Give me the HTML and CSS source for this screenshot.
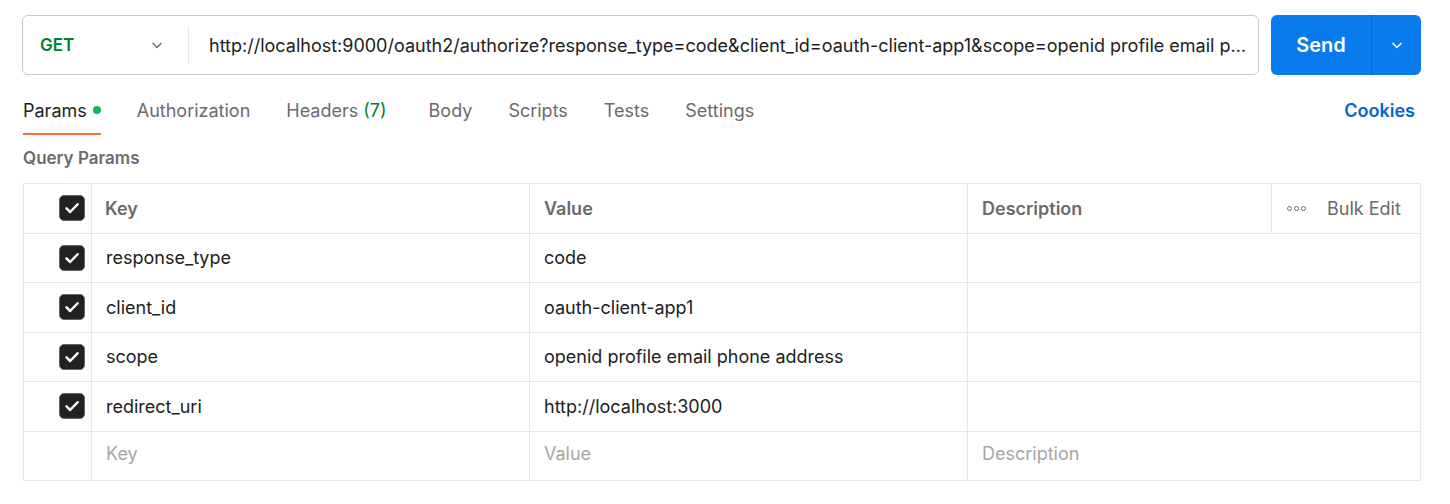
FILE: index.html
```html
<!DOCTYPE html>
<html>
<head>
<meta charset="utf-8">
<link rel="stylesheet" href="styles.css">
</head>
<body>
<div class="page">
  <div class="reqbar">
    <div class="urlbox">
      <div class="method">
        <span class="method-name">GET</span>
        <svg class="chev" width="16" height="16" viewBox="0 0 16 16"><path d="M3.5 6l4.5 4.5L12.5 6" fill="none" stroke="#6b6b6b" stroke-width="1.4"/></svg>
      </div>
      <div class="divider"></div>
      <div class="url">http://localhost:9000/oauth2/authorize?response_type=code&amp;client_id=oauth-client-app1&amp;scope=openid profile email phone address&amp;redirect_uri=http://localhost:3000</div>
    </div>
    <div class="send">
      <span class="send-label">Send</span>
      <span class="send-drop"><svg width="16" height="16" viewBox="0 0 16 16"><path d="M3.5 6l4.5 4.5L12.5 6" fill="none" stroke="#fff" stroke-width="1.4"/></svg></span>
    </div>
  </div>

  <div class="tabs">
    <div class="tab active">Params<span class="dot"></span></div>
    <div class="tab">Authorization</div>
    <div class="tab tab-headers">Headers <span class="count">(7)</span></div>
    <div class="tab">Body</div>
    <div class="tab">Scripts</div>
    <div class="tab">Tests</div>
    <div class="tab">Settings</div>
    <div class="spacer"></div>
    <div class="cookies">Cookies</div>
  </div>

  <div class="section-title">Query Params</div>

  <div class="table">
    <div class="row head">
      <div class="cell chk"><span class="box"><svg width="20" height="20" viewBox="0 0 16 16"><path d="M3.6 8.3l2.9 2.9 6-6.2" fill="none" stroke="#fff" stroke-width="2" stroke-linecap="round" stroke-linejoin="round"/></svg></span></div>
      <div class="cell key">Key</div>
      <div class="cell val">Value</div>
      <div class="cell desc head-desc">
        <span class="desc-label">Description</span>
        <div class="bulk"><span class="dots"><i></i><i></i><i></i></span><span class="bulk-label">Bulk Edit</span></div>
      </div>
    </div>
    <div class="row">
      <div class="cell chk"><span class="box"><svg width="20" height="20" viewBox="0 0 16 16"><path d="M3.6 8.3l2.9 2.9 6-6.2" fill="none" stroke="#fff" stroke-width="2" stroke-linecap="round" stroke-linejoin="round"/></svg></span></div>
      <div class="cell key">response_type</div>
      <div class="cell val">code</div>
      <div class="cell desc"></div>
    </div>
    <div class="row">
      <div class="cell chk"><span class="box"><svg width="20" height="20" viewBox="0 0 16 16"><path d="M3.6 8.3l2.9 2.9 6-6.2" fill="none" stroke="#fff" stroke-width="2" stroke-linecap="round" stroke-linejoin="round"/></svg></span></div>
      <div class="cell key">client_id</div>
      <div class="cell val">oauth-client-app1</div>
      <div class="cell desc"></div>
    </div>
    <div class="row">
      <div class="cell chk"><span class="box"><svg width="20" height="20" viewBox="0 0 16 16"><path d="M3.6 8.3l2.9 2.9 6-6.2" fill="none" stroke="#fff" stroke-width="2" stroke-linecap="round" stroke-linejoin="round"/></svg></span></div>
      <div class="cell key">scope</div>
      <div class="cell val">openid profile email phone address</div>
      <div class="cell desc"></div>
    </div>
    <div class="row">
      <div class="cell chk"><span class="box"><svg width="20" height="20" viewBox="0 0 16 16"><path d="M3.6 8.3l2.9 2.9 6-6.2" fill="none" stroke="#fff" stroke-width="2" stroke-linecap="round" stroke-linejoin="round"/></svg></span></div>
      <div class="cell key">redirect_uri</div>
      <div class="cell val">http://localhost:3000</div>
      <div class="cell desc"></div>
    </div>
    <div class="row last">
      <div class="cell chk"></div>
      <div class="cell key ph">Key</div>
      <div class="cell val ph">Value</div>
      <div class="cell desc ph">Description</div>
    </div>
  </div>
</div>
</body>
</html>
```

FILE: styles.css
```css
* { box-sizing: border-box; }
html, body { margin: 0; padding: 0; background: #fff; }
body {
  font-family: Inter, "Noto Sans", sans-serif;
  color: #212121;
  font-size: 18px;
}
.page {
  padding: 15px 29px 0 23px;
  width: 1450px;
}
.reqbar {
  display: flex;
  gap: 12px;
  height: 60px;
  margin-left: -1px;
}
.urlbox {
  flex: 1;
  min-width: 0;
  display: flex;
  align-items: center;
  border: 1px solid #c9c9c9;
  border-radius: 6px;
}
.method {
  width: 165px;
  display: flex;
  align-items: center;
  justify-content: space-between;
  padding: 0 23px 0 17px;
}
.method-name {
  color: #007f31;
  font-weight: 600;
  font-size: 17px;
}
.chev { display: block; }
.divider {
  width: 1px;
  height: 38px;
  background: #e6e6e6;
}
.url {
  flex: 1;
  min-width: 0;
  padding: 0 5px 0 20px;
  white-space: nowrap;
  overflow: hidden;
  text-overflow: ellipsis;
  font-size: 18px;
  color: #212121;
}
.send {
  width: 150px;
  display: flex;
  background: #097bed;
  border-radius: 6px;
  color: #fff;
}
.send-label {
  width: 101px;
  display: flex;
  align-items: center;
  justify-content: center;
  font-weight: 600;
  font-size: 20px;
  border-right: 1px solid #0a68c7;
}
.send-drop {
  flex: 1;
  display: flex;
  align-items: center;
  justify-content: center;
}
.tabs {
  display: flex;
  align-items: stretch;
  height: 60px;
  padding-top: 10px;
}
.tab {
  display: flex;
  align-items: center;
  font-size: 18px;
  color: #6b6b6b;
  margin-right: 36px;
  position: relative;
}
.tab-headers { margin-right: 42px; }
.tab.active {
  color: #212121;
}
.tab.active::after {
  content: "";
  position: absolute;
  left: 0;
  right: 0;
  bottom: 0;
  height: 2px;
  background: #ff6c37;
}
.dot {
  width: 8px;
  height: 8px;
  border-radius: 50%;
  background: #0cbb52;
  margin-left: 6px;
  display: inline-block;
}
.count { color: #007f31; margin-left: 5px; }
.spacer { flex: 1; }
.cookies {
  display: flex;
  align-items: center;
  color: #0265d2;
  font-weight: 600;
  font-size: 18px;
  padding-right: 6px;
}
.section-title {
  font-weight: 600;
  color: #6b6b6b;
  font-size: 17px;
  height: 50px;
  display: flex;
  align-items: center;
  margin-top: -2px;
  padding-bottom: 1px;
}
.table {
  border: 1px solid #e6e6e6;
  border-bottom: none;
  width: 1398px;
}
.row {
  display: flex;
  height: 49.5px;
  border-bottom: 1px solid #e6e6e6;
}
.cell {
  display: flex;
  align-items: center;
  font-size: 18px;
}
.chk {
  width: 68px;
  border-right: 1px solid #e6e6e6;
  justify-content: flex-end;
  padding-right: 6px;
}
.box {
  width: 26px;
  height: 26px;
  border-radius: 5px;
  background: #212121;
  border: 1px solid #666;
  display: flex;
  align-items: center;
  justify-content: center;
}
.box svg { display: block; }
.key {
  width: 438px;
  border-right: 1px solid #e6e6e6;
  padding-left: 14px;
}
.val {
  width: 438px;
  border-right: 1px solid #e6e6e6;
  padding-left: 14px;
}
.desc {
  flex: 1;
  padding-left: 14px;
}
.head .cell { font-weight: 600; color: #6b6b6b; }
.head .key { padding-left: 13px; }
.head-desc {
  justify-content: space-between;
  padding-right: 0;
}
.bulk {
  width: 149px;
  height: 100%;
  display: flex;
  align-items: center;
  border-left: 1px solid #e6e6e6;
  padding-left: 15px;
  font-weight: 400;
  color: #6b6b6b;
}
.dots { display: flex; gap: 2px; margin-right: 21px; }
.dots i {
  width: 5px; height: 5px;
  border-radius: 50%;
  border: 1.2px solid #6b6b6b;
  display: block;
}
.bulk-label { font-weight: 400; }
.last .cell { padding-bottom: 4px; }
.ph { color: #a6a6a6; }
```
